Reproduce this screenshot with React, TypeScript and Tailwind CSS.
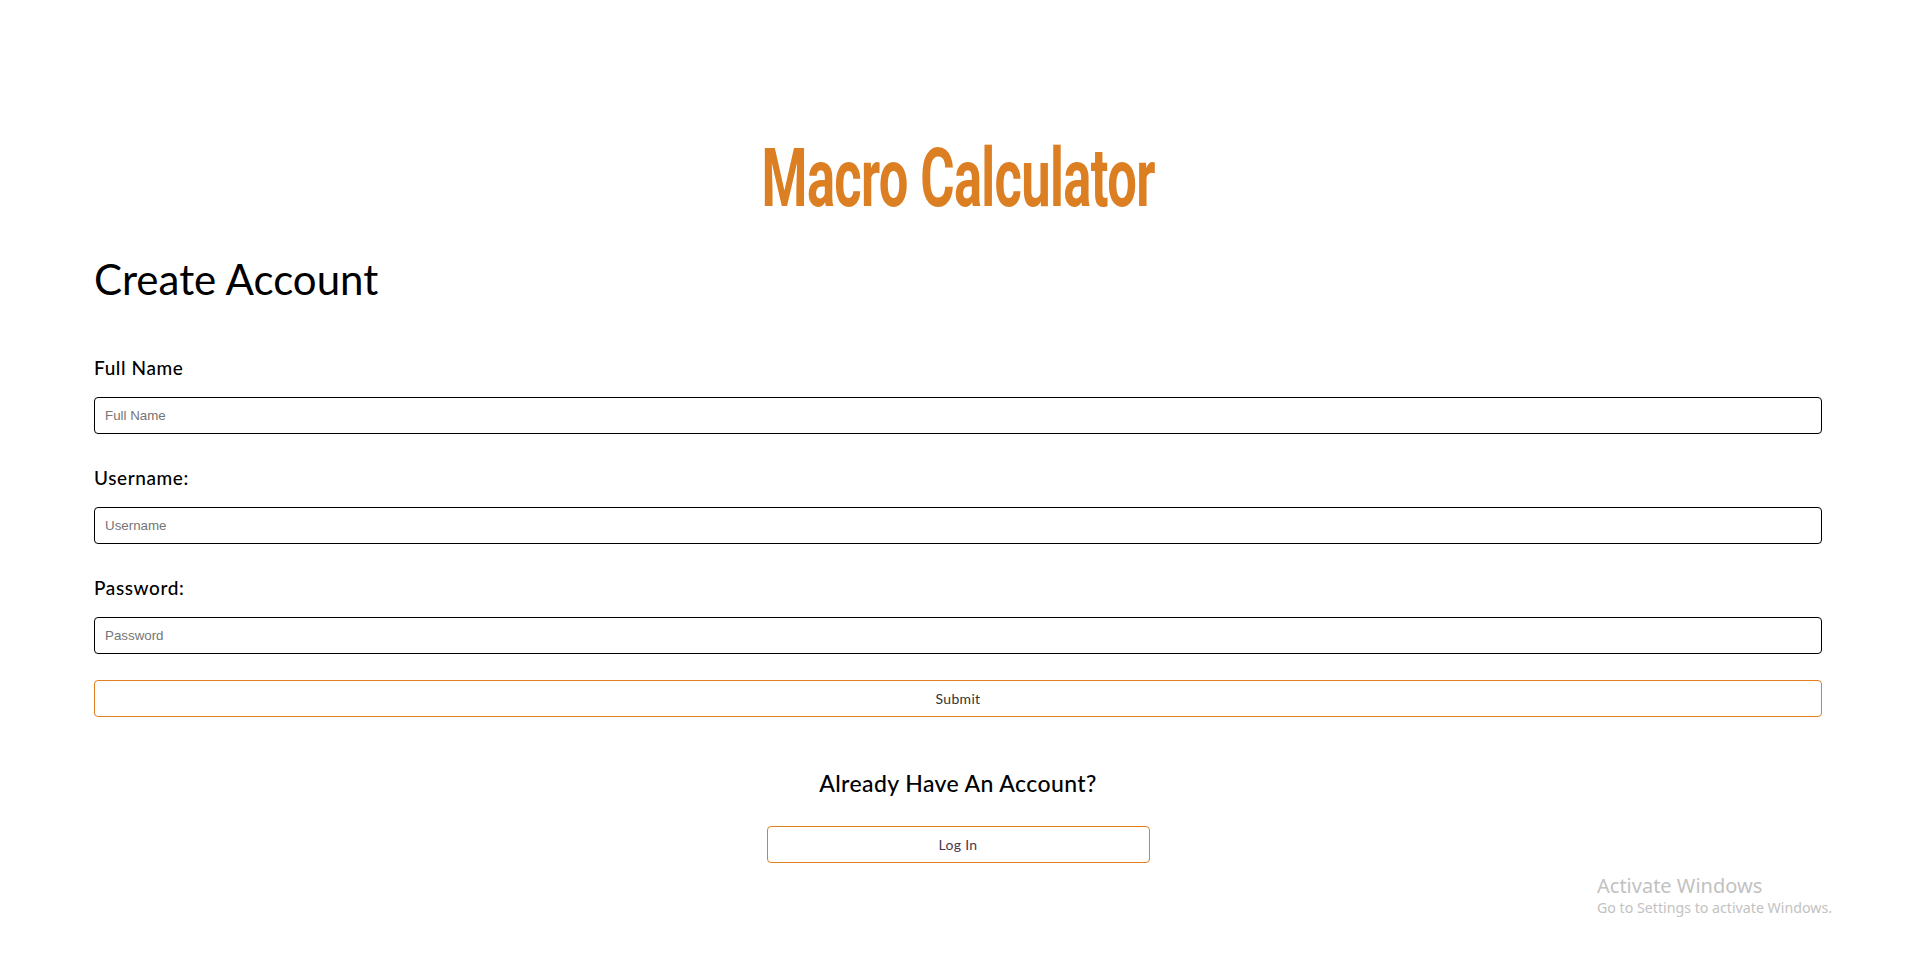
import React from "react";

const Field = ({ label, placeholder, type = "text", first = false }: { label: string; placeholder: string; type?: string; first?: boolean }) => (
  <div className={`flex flex-col ${first ? "mt-[58px]" : "mt-[34px]"}`}>
    <label className="text-[19px] leading-none font-medium tracking-[0.6px] text-black">{label}</label>
    <input
      type={type}
      placeholder={placeholder}
      className="mt-[20px] h-[37px] w-full rounded-[4px] border border-black px-[10px] font-['Liberation_Sans',Arial,sans-serif] text-[13.33px] text-black outline-none placeholder:text-[#757575]"
    />
  </div>
);

export default function App() {
  return (
    <div className="relative min-h-screen bg-white font-['Lato','Open_Sans',sans-serif] text-black">
      <div className="pl-[94px] pr-[96px] pt-[137px]">
        <h1 className="text-center font-['Roboto',sans-serif] text-[82px] font-bold leading-none text-[#dc7e22]">
          <span className="inline-block scale-x-[0.64] tracking-[-1px]">Macro Calculator</span>
        </h1>

        <h2 className="mt-[39px] text-[42px] leading-none font-normal">Create Account</h2>

        <form className="flex flex-col" onSubmit={(e) => e.preventDefault()}>
          <Field label="Full Name" placeholder="Full Name" first />
          <Field label="Username:" placeholder="Username" />
          <Field label="Password:" placeholder="Password" type="password" />

          <button
            type="submit"
            className="mt-[26px] h-[37px] w-full rounded-[4px] border border-[#e0801f] bg-white text-[14px] tracking-[0.3px] text-[#333333]"
          >
            Submit
          </button>
        </form>

        <div className="flex flex-col items-center">
          <h3 className="mt-[55px] text-[23px] leading-none font-medium tracking-[0.4px]">Already Have An Account?</h3>
          <button className="mt-[31px] h-[37px] w-[383px] rounded-[4px] border border-[#e0801f] bg-white text-[14px] tracking-[0.3px] text-[#4a3650]">
            Log In
          </button>
        </div>
      </div>

      {/* windows watermark */}
      <div className="pointer-events-none absolute left-[1597px] top-[874px] font-['Noto_Sans',sans-serif] text-[#c2c2c2]">
        <div className="text-[20px] leading-[24px]">Activate Windows</div>
        <div className="text-[14.2px] leading-[20px]">Go to Settings to activate Windows.</div>
      </div>
    </div>
  );
}
